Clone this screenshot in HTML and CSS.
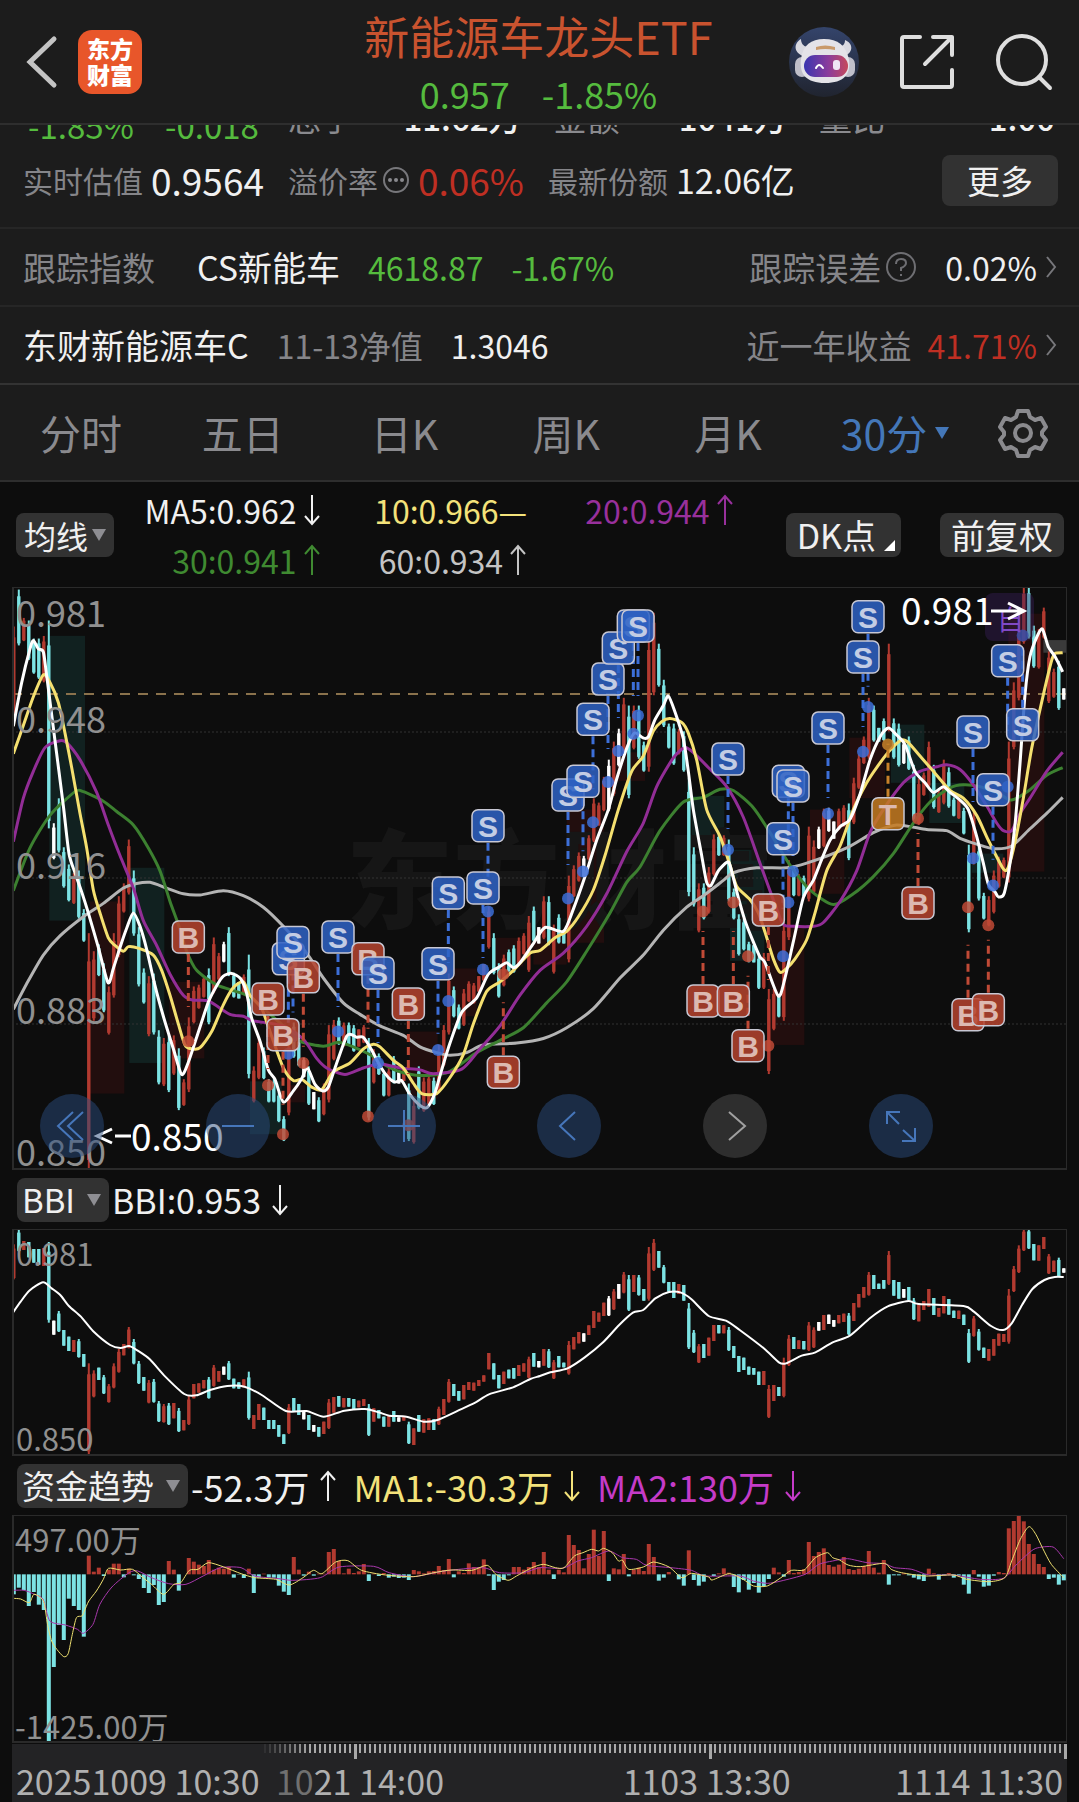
FILE: index.html
```html
<!DOCTYPE html>
<html lang="zh-CN">
<head>
  <meta charset="UTF-8">
  <meta name="viewport" content="width=device-width, initial-scale=1">
  <title>新能源车龙头ETF</title>
  <link rel="stylesheet" href="styles.css">
</head>
<body>
  <!-- Shared arrow icons -->
  <svg class="defs" width="0" height="0">
    <symbol id="down" viewBox="0 0 18 32"><path d="M9 1V30M2 22L9 30L16 22" /></symbol>
    <symbol id="up" viewBox="0 0 18 32"><path d="M9 31V2M2 10L9 2L16 10" /></symbol>
    <symbol id="more" viewBox="0 0 12 26"><path d="M2 3L10 13L2 23" /></symbol>
  </svg>

  <!-- Top bar -->
  <header class="topbar">
    <div class="topbar-left">
      <button class="icon-btn" aria-label="返回">
        <svg width="34" height="56" viewBox="0 0 34 56"><path d="M30 5L6 28L30 51" fill="none" stroke="#c4c4c4" stroke-width="5" stroke-linecap="round" /></svg>
      </button>
      <a class="logo" href="#"><span>东方</span><span>财富</span></a>
    </div>
    <div class="topbar-title">
      <h1>新能源车龙头ETF</h1>
      <p><span>0.957</span><span>-1.85%</span></p>
    </div>
    <div class="topbar-right">
      <button class="icon-btn" aria-label="助手">
        <svg width="70" height="70" viewBox="0 0 70 70">
          <defs>
            <linearGradient id="sky" x1="0" y1="0" x2="0" y2="1"><stop offset="0" stop-color="#34446b" /><stop offset="1" stop-color="#20242f" /></linearGradient>
            <linearGradient id="visor"><stop offset="0" stop-color="#3a35b0" /><stop offset=".55" stop-color="#8a3c9c" /><stop offset="1" stop-color="#c64a5c" /></linearGradient>
          </defs>
          <circle cx="35" cy="35" r="35" fill="url(#sky)" />
          <path d="M12 12C5 16 4 25 14 29L18 20C14 19 12 16 12 12Z" fill="#d9d9e0" />
          <path d="M56 13C64 16 65 25 56 29L50 20C54 19 56 17 56 13Z" fill="#d9d9e0" />
          <rect x="6" y="30" width="14" height="20" rx="7" fill="#bfbfca" />
          <rect x="52" y="30" width="14" height="20" rx="7" fill="#bfbfca" />
          <path d="M12 32C14 18 22 12 35 12C49 12 57 18 60 33C62 47 55 56 36 56C17 56 10 47 12 32Z" fill="#e4e3e8" />
          <path d="M27 20Q36 17 46 20V23Q36 21 27 23Z" fill="#c99a6b" />
          <rect x="15" y="28" width="44" height="22" rx="11" fill="url(#visor)" />
          <path d="M27 41Q30 35 34 41" fill="none" stroke="#fff" stroke-width="2" stroke-linecap="round" />
          <rect x="44" y="33" width="7" height="10" rx="3" fill="#efe6f5" />
        </svg>
      </button>
      <button class="icon-btn" aria-label="分享">
        <svg width="56" height="56" viewBox="0 0 56 56" fill="none" stroke="#dedede" stroke-width="4" stroke-linecap="round" stroke-linejoin="round"><path d="M21 3H5Q3 3 3 5V51Q3 53 5 53H51Q53 53 53 51V36M34 3H53V21M53 3L26 30" /></svg>
      </button>
      <button class="icon-btn" aria-label="搜索">
        <svg width="58" height="58" viewBox="0 0 58 58" fill="none" stroke="#dedede" stroke-width="4" stroke-linecap="round"><circle cx="27" cy="27" r="24" /><path d="M44 44L55 55" /></svg>
      </button>
    </div>
  </header>

  <!-- Quote rows -->
  <section class="quote">
    <div class="scrolled">
      <div class="scrolled-row">
        <span class="green">-1.85%</span><span class="green">-0.018</span>
        <span class="pair"><i>总手</i><b>11.62万</b></span>
        <span class="pair"><i>金额</i><b>1041万</b></span>
        <span class="pair"><i>量比</i><b>1.00</b></span>
      </div>
    </div>
    <div class="row row-first">
      <span class="label">实时估值</span><span class="num">0.9564</span>
      <span class="label gap-l">溢价率</span>
      <svg class="info" width="28" height="28" viewBox="0 0 28 28"><circle cx="14" cy="14" r="12" fill="none" stroke="#77777b" stroke-width="2" /><g fill="#8a8a8e"><circle cx="8" cy="14" r="2" /><circle cx="14" cy="14" r="2" /><circle cx="20" cy="14" r="2" /></g></svg>
      <span class="num red">0.06%</span>
      <span class="label gap-l">最新份额</span><span class="share">12.06亿</span>
      <button class="more-btn">更多</button>
    </div>
    <a class="row" href="#">
      <span class="label">跟踪指数</span><span class="name gap-xl">CS新能车</span>
      <span class="green gap-m">4618.87</span><span class="green gap-m">-1.67%</span>
      <span class="label push">跟踪误差</span>
      <svg class="info" width="32" height="32" viewBox="0 0 32 32" fill="none" stroke="#6e6e72" stroke-width="2"><circle cx="16" cy="16" r="14" /><path d="M11 13Q11 8 16 8Q21 8 21 12Q21 15 16 17V20" /><path d="M16 23V25" /></svg>
      <span class="gap-m">0.02%</span><svg class="chev"><use href="#more" /></svg>
    </a>
    <a class="row" href="#">
      <span class="name">东财新能源车C</span><span class="date gap-m">11-13净值</span><span class="gap-m">1.3046</span>
      <span class="label push">近一年收益</span><span class="red gap-s">41.71%</span><svg class="chev"><use href="#more" /></svg>
    </a>
  </section>

  <!-- Period tabs -->
  <nav class="tabs">
    <button>分时</button>
    <button>五日</button>
    <button>日K</button>
    <button>周K</button>
    <button>月K</button>
    <button class="active">30分<span class="tri"></span></button>
    <button class="gear" aria-label="设置">
      <svg width="50" height="50" viewBox="0 0 50 50" fill="none" stroke="#8a8a8e" stroke-width="4" stroke-linejoin="round"><path d="M20 3H30L32 9L37 12L43 10L48 19L44 24V27L48 32L43 41L37 39L32 42L30 48H20L18 42L13 39L7 41L2 32L6 27V24L2 19L7 10L13 12L18 9Z" /><circle cx="25" cy="25" r="8" /></svg>
    </button>
  </nav>

  <main class="charts">
    <div class="ma-bar">
      <button class="chip">均线<span class="tri"></span></button>
      <div class="ma-values">
        <span>MA5:0.962<svg class="arrow"><use href="#down" /></svg></span>
        <span class="yellow">10:0.966—</span>
        <span class="purple">20:0.944<svg class="arrow"><use href="#up" /></svg></span>
        <span class="green-ma">30:0.941<svg class="arrow"><use href="#up" /></svg></span>
        <span class="grey-ma">60:0.934<svg class="arrow"><use href="#up" /></svg></span>
      </div>
      <button class="chip chip-dk">DK点<span class="corner"></span></button>
      <button class="chip chip-last">前复权</button>
    </div>

    <div class="price-panel">
      <svg class="plot" id="price" viewBox="12 587 1055 583">
        <g id="zones"></g>
        <text class="watermark" x="346" y="920">东方财富</text>
        <path class="grid" d="M12 732H1067M12 878H1067M12 1024H1067" />
        <path class="last-price" d="M12 694H1067" />
        <g id="priceCandles"></g>
        <g id="priceLines"></g>
        <g class="axis-label axis-big">
          <text x="16" y="627">0.981</text>
          <text x="16" y="733">0.948</text>
          <text x="16" y="879">0.916</text>
          <text x="16" y="1024">0.883</text>
          <text x="16" y="1166">0.850</text>
        </g>
        <g id="markers"></g>
        <rect x="985" y="593" width="49" height="48" rx="8" fill="#3b2060" opacity=".4" />
        <text x="997" y="630" font-size="27" fill="#7f49c6">自</text>
        <g class="extreme">
          <text x="901" y="625">0.981</text>
          <path d="M991 611H1022M1008 603L1024 611L1008 619" />
          <text x="131" y="1151">0.850</text>
          <path d="M112 1129L97 1136L112 1143M115 1136H131" />
        </g>
        <rect class="frame" x="13" y="587" width="1054" height="582" />
      </svg>
      <div class="tools">
        <button aria-label="最早"><svg viewBox="0 0 64 64"><path d="M33 18L18 32L33 46M43 18L28 32L43 46" /></svg></button>
        <button aria-label="缩小"><svg viewBox="0 0 64 64"><path d="M16 32H48" /></svg></button>
        <button aria-label="放大"><svg viewBox="0 0 64 64"><path d="M16 32H48M32 16V48" /></svg></button>
        <button aria-label="左移"><svg viewBox="0 0 64 64"><path d="M38 18L23 32L38 46" /></svg></button>
        <button class="off" aria-label="右移"><svg viewBox="0 0 64 64"><path d="M26 18L42 32L26 46" /></svg></button>
        <button aria-label="全屏"><svg viewBox="0 0 64 64"><path d="M18 30V18H31M18 18L30 30M34 36L46 47M46 34V47H33" /></svg></button>
      </div>
    </div>

    <div class="sub-bar">
      <button class="chip">BBI<span class="tri"></span></button>
      <span>BBI:0.953<svg class="arrow"><use href="#down" /></svg></span>
    </div>
    <svg class="plot" viewBox="12 1229 1055 227">
      <g id="bbiCandles"></g>
      <g id="bbiLines"></g>
      <g class="axis-label">
        <text x="16" y="1266">0.981</text>
        <text x="16" y="1451">0.850</text>
      </g>
      <rect class="frame" x="13" y="1229" width="1054" height="226" />
    </svg>

    <div class="sub-bar sub-bar-fund">
      <button class="chip">资金趋势<span class="tri"></span></button>
      <span>-52.3万<svg class="arrow"><use href="#up" /></svg></span>
      <span class="yellow gap-s">MA1:-30.3万<svg class="arrow"><use href="#down" /></svg></span>
      <span class="magenta gap-s">MA2:130万<svg class="arrow"><use href="#down" /></svg></span>
    </div>
    <svg class="plot" viewBox="12 1514 1055 229">
      <g id="fundBars"></g>
      <g id="fundLines"></g>
      <g class="axis-label">
        <text x="15" y="1551">497.00万</text>
        <text x="15" y="1738">-1425.00万</text>
      </g>
      <rect class="frame" x="13" y="1514" width="1054" height="227" />
    </svg>

    <footer class="timeline">
      <svg class="ticks" id="ticks" viewBox="12 0 1055 16"></svg>
      <div class="dates">
        <span>20251009 10:30</span>
        <span><span class="fade">10</span>21 14:00</span>
        <span>1103 13:30</span>
        <span>1114 11:30</span>
      </div>
    </footer>
  </main>
  <script src="chart.js"></script>
</body>
</html>
```
FILE: styles.css
```css
* {
  box-sizing: border-box;
}

body {
  margin: 0;
  background: #0d0d0d;
  color: #f0f0f0;
  font-family: "Noto Sans CJK SC", "Noto Sans", sans-serif;
  font-size: 32px;
  line-height: 1;
}

button {
  font: inherit;
  color: inherit;
  background: none;
  border: 0;
  padding: 0;
  cursor: pointer;
}

a {
  color: inherit;
  text-decoration: none;
}

svg {
  display: block;
}

.defs {
  position: absolute;
}

.green { color: #55bb3e; }
.red { color: #bf2f23; }
.yellow { color: #f3e27a; }
.purple { color: #98309c; }
.green-ma { color: #3f8a31; }
.grey-ma { color: #c4c4c4; }
.magenta { color: #c53bc8; }

/* Top bar */
.topbar {
  display: grid;
  grid-template-columns: 1fr auto 1fr;
  height: 125px;
  padding: 0 26px 0 24px;
  background: #1c1c1c;
  border-bottom: 2px solid #2e2e2e;
}

.topbar-left,
.topbar-right {
  display: flex;
  align-items: center;
}

.topbar-left {
  gap: 20px;
}

.topbar-right {
  justify-content: flex-end;
  gap: 40px;
}

.logo {
  display: flex;
  flex-direction: column;
  justify-content: center;
  align-items: center;
  gap: 3px;
  width: 64px;
  height: 64px;
  border-radius: 14px;
  background: #e8562a;
  color: #fff;
  font-size: 23px;
  font-weight: 900;
}

.topbar-title {
  text-align: center;
}

.topbar-title h1 {
  margin: 13px 0 9px;
  color: #c9532f;
  font-size: 45px;
  font-weight: 400;
}

.topbar-title p {
  display: flex;
  justify-content: center;
  gap: 32px;
  margin: 0;
  color: #55bb3e;
  font-size: 36px;
  line-height: 52px;
}

/* Quote rows */
.quote {
  background: #1c1c1c;
}

/* The first row is half scrolled under the top bar */
.scrolled {
  display: flex;
  align-items: flex-end;
  height: 17px;
  overflow: hidden;
}

.scrolled-row {
  display: grid;
  grid-template-columns: 137px 123px 1fr 1fr 236px;
  flex: 1;
  align-items: end;
  padding: 0 24px 0 28px;
  font-size: 33px;
}

.pair {
  display: flex;
  justify-content: space-between;
  margin-bottom: 8px;
  padding-right: 32px;
}

.pair:last-child {
  padding-right: 0;
}

.pair i {
  color: #8a8a8e;
  font-style: normal;
}

.pair b {
  font-weight: 500;
}

.row {
  display: flex;
  align-items: center;
  height: 78px;
  padding: 0 22px 0 23px;
  border-bottom: 2px solid #262626;
  white-space: nowrap;
}

.row-first {
  height: 87px;
  padding-right: 21px;
  padding-bottom: 9px;
}

.row:last-child {
  border-bottom-color: #333;
}

.label {
  color: #858589;
  font-size: 33px;
}

.date {
  color: #858589;
}

.name {
  font-size: 34px;
}

.row-first .label {
  font-size: 30px;
}

.num {
  margin-left: 8px;
  font-size: 37px;
}

.share {
  margin-left: 8px;
  font-size: 34px;
}

.gap-s { margin-left: 16px; }
.gap-m { margin-left: 28px; }
.gap-l { margin-left: 24px; }
.gap-xl { margin-left: 42px; }
.push { margin-left: auto; }

.info {
  margin-left: 4px;
}

.more-btn {
  width: 116px;
  height: 51px;
  margin-left: auto;
  border-radius: 8px;
  background: #323232;
  font-size: 33px;
}

.chev {
  width: 12px;
  height: 26px;
  margin-left: 8px;
  fill: none;
  stroke: #77777b;
  stroke-width: 2;
}

/* Period tabs */
.tabs {
  display: grid;
  grid-template-columns: repeat(5, 1fr) 172px 84px;
  align-items: center;
  justify-items: center;
  height: 97px;
  padding-right: 14px;
  border-bottom: 2px solid #2e2e2e;
  background: #1c1c1c;
  color: #8a8a8e;
  font-size: 41px;
}

.tabs .active {
  display: flex;
  align-items: center;
  gap: 8px;
  color: #4477b8;
}

.tri {
  border: 7px solid transparent;
  border-top: 12px solid currentColor;
  border-bottom: 0;
}

/* Indicator bars */
.charts {
  padding: 0 12px;
}

.chip {
  position: relative;
  display: flex;
  align-items: center;
  gap: 4px;
  height: 44px;
  padding: 0 8px;
  border-radius: 8px;
  background: #323232;
  white-space: nowrap;
}

.chip .tri {
  color: #8e8e93;
}

.ma-bar {
  display: flex;
  align-items: center;
  height: 105px;
  padding: 0 3px 0 4px;
}

.ma-values {
  display: grid;
  grid-template-columns: repeat(3, 1fr);
  flex: 1;
  row-gap: 18px;
  padding-right: 52px;
  justify-items: end;
}

.ma-values span,
.sub-bar > span {
  display: flex;
  align-items: center;
  white-space: nowrap;
}

.arrow {
  width: 18px;
  height: 32px;
  margin-left: 6px;
  fill: none;
  stroke: currentColor;
  stroke-width: 2;
}

.chip-dk,
.chip-last {
  padding: 0 11px;
  font-size: 34px;
}

.chip .corner {
  align-self: flex-end;
  margin: 0 -5px 6px 4px;
  border-left: 11px solid transparent;
  border-bottom: 11px solid #fff;
}

.chip-last {
  margin-left: 39px;
}

.sub-bar {
  display: flex;
  align-items: center;
  height: 59px;
  padding-left: 5px;
  font-size: 34px;
}

.sub-bar-fund {
  font-size: 36px;
}

.sub-bar .arrow {
  margin-left: 10px;
}

.sub-bar .chip {
  gap: 12px;
  margin-right: 3px;
  padding: 0 8px 0 5px;
  font-size: 33px;
}

/* Plots */
.plot {
  width: 100%;
  height: auto;
}

.price-panel {
  position: relative;
}

.frame {
  fill: none;
  stroke: #2a2a2a;
  stroke-width: 2;
}

.grid {
  stroke: #333;
  stroke-dasharray: 2 2;
}

.last-price {
  stroke: #8a724c;
  stroke-width: 2;
  stroke-dasharray: 10 8;
}

.watermark {
  fill: #161616;
  font-size: 107px;
  font-weight: 900;
}

.axis-label {
  fill: #909090;
  font-size: 31px;
}

.axis-big {
  font-size: 36px;
}

.extreme text {
  fill: #fff;
  font-size: 37px;
}

.extreme path {
  fill: none;
  stroke: #fff;
  stroke-width: 3;
}

.curve {
  fill: none;
  stroke-width: 2;
  stroke-linejoin: round;
}

.curve.bold {
  stroke-width: 3;
}

.curve.thin {
  stroke-width: 1;
}

.badge {
  font-family: "Liberation Sans", Arial, sans-serif;
  font-size: 30px;
  font-weight: 700;
  text-anchor: middle;
}

/* Round buttons over the price plot */
.tools {
  position: absolute;
  left: 28px;
  right: 134px;
  bottom: 12px;
  display: flex;
  justify-content: space-between;
}

.tools button {
  width: 64px;
  height: 64px;
  border-radius: 50%;
  background: rgba(42, 75, 125, 0.5);
}

.tools .off {
  background: rgba(80, 80, 80, 0.5);
}

.tools svg {
  fill: none;
  stroke: #4676ba;
  stroke-width: 2;
}

.tools .off svg {
  stroke: #a0a0a0;
}

/* Time axis */
.timeline {
  height: 59px;
  background: #232325;
  color: #b0b0b0;
  font-size: 34px;
}

.ticks {
  width: 100%;
  height: auto;
}

.dates {
  display: grid;
  grid-template-columns: 260px 1fr 1fr 1fr;
  padding: 4px 4px 0;
  white-space: nowrap;
}

.dates > span:nth-child(n + 3) {
  text-align: right;
}

.dates > span:nth-child(3) {
  margin-right: 10px;
}

.fade {
  color: #707070;
}
```
FILE: chart.js
```js
const RED = '#b23a30';
const CYAN = '#7ce3e4';
const WHITE = '#ffffff';
const colors = { r: RED, c: CYAN, w: WHITE };

// One token per 30 minute bar: high-low on a scale where 177 is 0.981 and 855 is 0.850
const bars = `223-328r 180-245c 213-240r 216-262c 237-278c 237-284c 234-288r 216-458c 452-494w 423-486c
480-527c 500-543c 510-546r 507-563c 552-590c 580-854r 601-682r 593-630c 615-672c 642-698r
580-655r 537-608r 522-556r 471-535r 507-583c 573-642c 621-662c 630-700r 627-698c 693-756c
702-758r 699-765c 699-745r 714-786c 750-781r 678-765r 642-685r 640-668r 630-655r 621-686c
585-650r 603-635r 590-614w 573-630c 626-655c 637-656c 628-652r 605-749c 735-777r 702-750r
713-750c 750-777c 750-777c 765-800c 793-822c 702-792r 684-725c 702-735c 725-748w 735-780c
765-785w 771-800c 755-792r 687-777r 681-728r 678-710c 684-712r 684-710c 687-718c 692-712r
687-708r 702-798c 715-755r 720-745c 740-770c 737-770r 723-755c 742-755w 738-752r 755-822c
775-825r 735-785c 748-788r 745-780r 748-780c 710-765r 687-735r 627-698r 642-678c 663-692c
645-688r 636-660r 638-662r 630-648r 616-635r 549-598r 580-628c 615-655c 605-642r 599-625c
594-626c 585-618r 580-605r 560-625r 549-590c 573-592w 537-587r 537-594c 570-627r 558-592c
578-592c 513-614r 501-538r 486-520r 490-515w 466-495r 423-474r 428-455r 398-438r 378-438w
357-420r 342-386w 306-370r 315-423c 315-366r 315-377c 357-392c 231-392r 207-303r 243-293c
285-340c 336-365c 336-384c 342-372r 345-392c 399-537c 480-549c 522-579r 522-564c 503-557r
465-513r 465-490c 466-490r 471-543c 528-564c 558-606c 563-600c 590-614c 594-614c 605-645c
603-645r 645-744r 645-693r 651-678c 563-682r 495-588r 501-537c 511-537r 513-538c 456-543r
472-534r 456-482w 435-480r 434-462w 450-470w 435-460r 431-456r 429-495c 399-453r 372-412r
351-383r 306-377r 315-357c 341-357c 330-356c 243-345r 330-377c 336-386c 357-383w 351-390c
384-450c 400-454r 393-420r 357-410r 384-435c 414-440r 378-430r 387-434c 422-444c 422-447r
434-465c 477-579c 438-500r 477-542c 533-564c 537-572r 507-557r 491-527r 492-516r 357-521r
288-366r 226-309r 177-243r 177-237c 222-271c 226-272r 201-237r 252-312r 272-306r 263-320c
295-308w`.split(/\s+/);

// Money flow per bar, 340 is the zero line
const flow = `400 380 387 435 393 431 447 843 618 492 537 413 435 447 527 284 332 320 345 326
308 308 349 323 343 354 381 396 372 432 423 300 326 389 340 291 302 311 315 297
326 320 323 317 350 341 351 323 396 350 338 350 350 374 392 402 288 326 344 332
344 338 338 273 264 300 337 323 336 331 309 360 338 345 336 350 347 351 350 357
327 331 337 331 330 315 327 294 349 331 336 307 318 318 295 344 387 362 357 343
318 318 326 318 303 318 273 326 354 326 334 222 252 267 322 279 206 285 210 360
322 325 279 346 326 320 330 249 288 359 350 333 340 355 374 268 357 374 362 340
345 337 322 335 378 394 357 386 366 395 375 354 320 334 347 297 336 333 325 243
285 273 262 312 317 311 288 324 327 323 315 270 320 335 297 371 343 343 337 343
350 355 360 323 337 356 343 336 350 344 371 398 327 347 377 374 344 333 336 202
180 165 181 249 279 309 318 354 350 371 358`.split(/\s+/).map(Number);

const curves = {
  ma60: '40,1122 80,1055 130,980 180,930 250,880 310,845 370,805 410,793 450,790 500,805 550,820 600,823 670,812 730,825 790,855 850,905 920,975 970,1040 1030,1105 1080,1135 1140,1165 1210,1190 1260,1220 1310,1235 1350,1242 1400,1235 1450,1215 1550,1210 1630,1198 1700,1170 1780,1120 1860,1040 1930,980 1990,915 2060,855 2110,825 2170,785 2200,765 2270,752 2360,752 2420,740 2540,700 2620,660 2690,640 2780,652 2840,655 2880,675 2930,690 2980,702 3035,695 3090,650 3140,610 3188,568',
  ma30: '40,812 90,700 150,615 225,553 250,553 310,578 350,605 400,640 445,700 480,760 510,840 535,900 560,970 590,1020 650,1058 740,1085 790,1120 850,1165 900,1205 970,1218 1015,1208 1060,1220 1120,1245 1160,1270 1200,1285 1260,1295 1340,1288 1390,1260 1430,1235 1500,1203 1570,1170 1640,1105 1700,1050 1760,970 1830,870 1880,790 1920,750 1980,655 2050,580 2110,568 2160,547 2200,550 2260,595 2310,660 2370,745 2430,810 2500,848 2560,820 2620,775 2680,715 2740,635 2790,580 2850,543 2890,535 2940,540 3000,560 3035,575 3090,548 3140,510 3188,490',
  ma20: '40,684 70,570 100,500 135,438 180,420 200,425 240,470 290,555 325,640 360,720 400,805 430,890 470,955 510,1030 550,1085 580,1098 625,1100 690,1135 730,1140 760,1152 850,1165 910,1200 950,1250 980,1275 1035,1292 1090,1275 1140,1265 1200,1275 1260,1280 1300,1290 1385,1278 1440,1225 1500,1165 1560,1085 1620,1020 1690,975 1760,905 1820,820 1880,710 1930,635 1970,540 2020,465 2055,438 2085,455 2125,490 2180,540 2230,620 2280,740 2330,860 2350,900 2380,905 2440,905 2470,895 2520,840 2570,760 2610,660 2650,600 2710,530 2760,500 2810,488 2840,483 2880,495 2920,535 2960,590 2990,635 3010,655 3035,655 3060,610 3090,570 3140,500 3188,450',
  ma10: '40,454 70,380 100,305 130,248 150,268 175,320 195,400 215,490 240,610 260,700 280,810 300,870 325,935 345,955 370,970 385,958 415,962 460,980 485,1020 510,1085 535,1160 555,1215 575,1225 600,1222 635,1180 670,1110 700,1065 730,1050 750,1085 785,1120 810,1180 850,1275 880,1308 905,1305 935,1325 965,1332 1000,1285 1050,1262 1090,1225 1120,1213 1140,1220 1180,1255 1210,1275 1240,1315 1265,1342 1310,1342 1350,1300 1390,1240 1420,1160 1460,1075 1500,1050 1540,1020 1590,975 1620,968 1665,935 1700,918 1735,880 1780,810 1815,720 1855,600 1895,500 1930,460 1960,395 1985,370 2010,362 2045,372 2065,400 2090,470 2120,600 2160,670 2190,745 2210,800 2250,835 2275,870 2295,920 2320,990 2340,1025 2360,1015 2385,990 2420,940 2445,870 2480,760 2520,695 2560,600 2600,530 2630,490 2670,445 2705,418 2725,425 2760,460 2800,500 2850,550 2890,570 2930,615 2965,680 3010,755 3025,750 3045,685 3070,570 3095,440 3130,300 3155,210 3165,192 3188,190',
  ma5: '40,382 65,268 90,180 100,158 115,180 130,188 140,250 165,420 190,590 207,715 225,765 245,815 265,870 295,960 324,1052 340,1015 362,955 380,910 400,870 420,905 440,965 465,1060 490,1140 520,1225 545,1292 565,1260 590,1195 625,1103 650,1060 670,1035 695,1028 722,1042 740,1080 755,1145 780,1205 805,1280 825,1305 850,1364 880,1335 905,1303 922,1275 945,1318 968,1335 985,1325 1005,1275 1040,1192 1060,1190 1070,1195 1090,1195 1115,1228 1140,1270 1165,1300 1185,1312 1205,1308 1230,1345 1260,1373 1282,1378 1305,1340 1325,1280 1350,1210 1385,1130 1430,1092 1465,1030 1500,1010 1520,1000 1540,1013 1560,1000 1600,950 1635,908 1690,918 1720,860 1755,775 1790,680 1825,600 1850,520 1880,440 1903,400 1930,413 1945,410 1965,365 1990,328 2005,303 2025,345 2050,415 2065,500 2080,600 2105,720 2120,790 2133,798 2155,760 2180,738 2190,745 2215,830 2235,890 2255,935 2280,985 2295,1000 2335,1087 2355,1040 2380,945 2410,830 2440,785 2465,730 2490,680 2520,645 2550,625 2580,560 2610,470 2640,410 2665,387 2690,405 2715,430 2745,500 2775,530 2800,555 2830,540 2850,555 2880,575 2905,600 2930,670 2950,740 2965,795 2985,815 2995,828 3012,820 3030,740 3045,640 3060,480 3075,300 3090,200 3110,150 3127,128 3145,175 3165,200 3188,240',
  bbi: '38,427 60,395 85,362 125,337 150,355 175,375 200,408 235,440 270,483 320,525 350,534 375,528 400,542 435,568 480,620 535,672 570,676 610,660 660,648 710,650 760,675 830,723 890,723 940,740 1000,722 1060,717 1100,727 1130,737 1180,740 1230,755 1270,750 1330,722 1380,698 1420,673 1490,652 1540,627 1568,618 1598,607 1648,595 1698,562 1753,515 1798,465 1838,428 1868,420 1903,385 1943,366 1978,368 2008,388 2058,438 2108,452 2148,480 2218,535 2263,578 2283,580 2328,557 2368,547 2418,517 2468,497 2528,443 2578,409 2638,393 2668,402 2798,408 2828,425 2878,468 2913,480 2938,460 2968,405 2998,357 3033,330 3063,321 3089,321',
  flow2: '38,388 70,388 100,400 125,415 145,480 190,492 225,505 242,517 270,490 290,430 325,378 375,335 400,330 440,350 490,368 540,370 590,345 640,320 700,320 740,345 810,353 850,358 930,350 985,318 1085,316 1130,335 1200,347 1290,330 1400,320 1450,335 1520,335 1568,320 1633,322 1678,300 1718,290 1768,270 1808,290 1848,295 1878,313 1948,320 2008,328 2048,345 2148,345 2188,360 2228,367 2268,360 2338,340 2378,310 2418,300 2461,293 2518,305 2568,308 2598,320 2648,325 2698,342 2768,342 2848,355 2913,352 2948,315 2978,285 3008,262 3058,258 3089,293',
  flow1: '38,412 60,414 85,425 98,400 115,408 128,425 138,490 150,540 165,565 185,587 198,578 210,520 222,470 238,465 245,450 258,420 280,390 300,355 315,322 350,327 385,325 415,350 440,370 475,400 505,370 525,365 550,328 575,325 605,305 650,318 700,338 740,350 800,355 840,372 880,350 910,328 935,338 975,303 1010,299 1050,328 1120,342 1200,347 1260,335 1310,327 1370,328 1415,313 1440,340 1475,358 1500,345 1545,320 1578,310 1613,320 1638,320 1668,285 1693,275 1718,265 1738,270 1753,262 1778,275 1796,300 1808,298 1826,325 1868,318 1898,303 1943,318 1980,350 2008,337 2058,348 2068,357 2118,338 2158,355 2188,375 2228,375 2268,350 2298,328 2335,327 2368,290 2403,275 2418,290 2438,297 2463,312 2498,317 2568,307 2588,325 2618,335 2688,345 2768,342 2808,355 2873,362 2918,350 2938,300 2963,235 2988,197 3008,220 3028,262 3053,310 3089,350'
};

// Shaded holding (red) and empty (teal) periods: left, top, right, bottom
const zones = [
  ['t', 148, 146, 255, 890], ['t', 388, 752, 493, 1262], ['t', 750, 1310, 845, 1448],
  ['t', 2075, 564, 2173, 682], ['t', 2190, 705, 2293, 995], ['t', 2673, 378, 2773, 530],
  ['t', 2788, 530, 2893, 635], ['t', 2915, 715, 3010, 765],
  ['r', 270, 840, 373, 1342], ['r', 508, 1050, 613, 1250], ['r', 865, 1320, 915, 1365],
  ['r', 1228, 1180, 1313, 1355], ['r', 1345, 1015, 1430, 1140], ['r', 1480, 935, 1570, 1010],
  ['r', 1600, 920, 1700, 1005], ['r', 1700, 600, 1812, 948], ['r', 1850, 450, 1935, 525],
  ['r', 2305, 905, 2413, 1215], ['r', 2430, 600, 2533, 820], ['r', 2548, 412, 2655, 570],
  ['r', 3025, 88, 3133, 762], ['g', 3130, 157, 3200, 190]
];

// Trade markers: type, x, badge y, dot y
const trades = [
  ['B', 565, 933, 1205], ['S', 865, 990, 1238], ['S', 879, 947, 1192], ['B', 910, 1037, 1262],
  ['B', 804, 1095, 1320], ['B', 849, 1188, 1448], ['S', 1014, 933, 1180], ['B', 1104, 990, 1402],
  ['S', 1134, 1027, 1262], ['B', 1225, 1108, 1425], ['S', 1314, 1003, 1228], ['S', 1345, 818, 1100],
  ['S', 1449, 805, 1018], ['S', 1464, 642, 866], ['B', 1510, 1286, 1030], ['S', 1704, 562, 832],
  ['S', 1749, 526, 762], ['S', 1779, 364, 633], ['S', 1824, 259, 528], ['S', 1855, 178, 447],
  ['S', 1900, 120, 402], ['S', 1914, 120, 354], ['S', 2184, 468, 705], ['B', 2109, 1100, 866],
  ['B', 2200, 1100, 843], ['B', 2244, 1217, 983], ['B', 2305, 862, 1217], ['S', 2365, 526, 843],
  ['S', 2379, 538, 762], ['S', 2349, 676, 983], ['S', 2484, 387, 611], ['S', 2589, 201, 449],
  ['S', 2604, 96, 332], ['T', 2664, 611, 430], ['B', 2754, 844, 623], ['S', 2919, 397, 727],
  ['S', 2979, 548, 798], ['B', 2904, 1136, 855], ['B', 2965, 1123, 902], ['S', 3023, 211, 540],
  ['S', 3068, 378, 145]
];

function add(parent, tag, attrs, text) {
  const el = document.createElementNS('http://www.w3.org/2000/svg', tag);
  for (const key in attrs) el.setAttribute(key, attrs[key]);
  if (text) el.textContent = text;
  document.getElementById(parent).appendChild(el);
}

const barX = i => 13.8 + i * 5;
const priceX = x => x / 3;
const priceY = y => 580 + y * 0.3827;

// Candles go into both the price plot and the BBI plot
function drawCandles(parent, toY) {
  bars.forEach((bar, i) => {
    const [high, low] = bar.slice(0, -1).split('-').map(Number);
    const fill = colors[bar.slice(-1)];
    const top = toY(high);
    const height = toY(low) - top;
    const inset = height > 18 ? height * 0.12 : 0;
    add(parent, 'rect', { x: barX(i) - 1, y: top, width: 2, height, fill });
    add(parent, 'rect', { x: barX(i) - 1.7, y: top + inset, width: 3.4, height: height - inset * 1.3, fill });
  });
}

// Smooth curve through all the points
function drawCurve(parent, name, color, toX, toY, cls) {
  const p = curves[name].split(' ').map(s => s.split(',').map(Number)).map(([x, y]) => [toX(x), toY(y)]);
  let d = `M${p[0]}`;
  for (let i = 0; i < p.length - 1; i++) {
    const a = p[i - 1] || p[i], b = p[i], c = p[i + 1], e = p[i + 2] || c;
    d += `C${b[0] + (c[0] - a[0]) / 8} ${b[1] + (c[1] - a[1]) / 8} ${c[0] - (e[0] - b[0]) / 8} ${c[1] - (e[1] - b[1]) / 8} ${c}`;
  }
  add(parent, 'path', { d, stroke: color, class: 'curve ' + cls });
}

const zoneColors = { t: '#112120', r: '#220e0e', g: '#3a3a3a' };
zones.forEach(([type, l, t, r, b]) => {
  add('zones', 'rect', { x: priceX(l), y: priceY(t), width: priceX(r - l), height: priceY(b) - priceY(t), fill: zoneColors[type] });
});

drawCandles('priceCandles', y => 587 + (y - 177) * 0.859);
drawCurve('priceLines', 'ma60', '#b4b4b4', priceX, priceY, 'bold');
drawCurve('priceLines', 'ma30', '#3c8030', priceX, priceY, 'bold');
drawCurve('priceLines', 'ma20', '#922d96', priceX, priceY, 'bold');
drawCurve('priceLines', 'ma10', '#f5e070', priceX, priceY, 'bold');
drawCurve('priceLines', 'ma5', '#ffffff', priceX, priceY, 'bold');

// Dots and dashed leads first, so that badges stay on top
const tradeColors = { B: '#c04a36', S: '#3c6fd8', T: '#c9822a' };
trades.forEach(([type, x, badge, dot]) => {
  const side = dot > badge ? 1 : -1;
  const start = priceY(badge) + side * 17;
  const end = type === 'S' && dot < badge ? start - 60 : start + side * 53;
  add('markers', 'path', { d: `M${priceX(x)} ${start}V${end}`, stroke: tradeColors[type], 'stroke-width': 3, 'stroke-dasharray': '8 5' });
  add('markers', 'circle', { cx: priceX(x), cy: priceY(dot), r: 6, fill: tradeColors[type], opacity: 0.85 });
});
const badgeColors = { B: '#b5432f', S: '#2f62c4', T: '#c47a22' };
trades.forEach(([type, x, badge]) => {
  const cx = priceX(x), cy = priceY(badge);
  add('markers', 'rect', { x: cx - 16, y: cy - 16, width: 32, height: 32, rx: 6, fill: badgeColors[type], 'fill-opacity': 0.86, stroke: '#c8c8d4', 'stroke-width': 1.5 });
  add('markers', 'text', { x: cx, y: cy + 11, class: 'badge', fill: type === 'S' ? '#c3cde4' : '#dcb9b1' }, type);
});

const subX = x => x / 2.904;
drawCandles('bbiCandles', y => 1170 + y / 3);
drawCurve('bbiLines', 'bbi', '#ffffff', subX, y => 1170 + y / 3, '');

const flowY = y => 1460 + y / 3;
flow.forEach((v, i) => {
  add('fundBars', 'rect', {
    x: barX(i) - 2, y: Math.min(flowY(v), flowY(340)), width: 4,
    height: Math.abs(v - 340) / 3, fill: v > 340 ? CYAN : RED
  });
});
drawCurve('fundLines', 'flow2', '#a838ac', subX, flowY, 'thin');
drawCurve('fundLines', 'flow1', '#efe070', subX, flowY, 'thin');

// Time ruler, fading in from the left
for (let x = 264; x <= 1064; x += 5) {
  const major = x === 354 || x === 709 || x === 1064;
  add('ticks', 'rect', {
    x, y: 0, width: major ? 3 : 2, height: major ? 15 : 9,
    fill: '#a8a8a8', opacity: Math.min(1, (x - 259) / 50)
  });
}
```
